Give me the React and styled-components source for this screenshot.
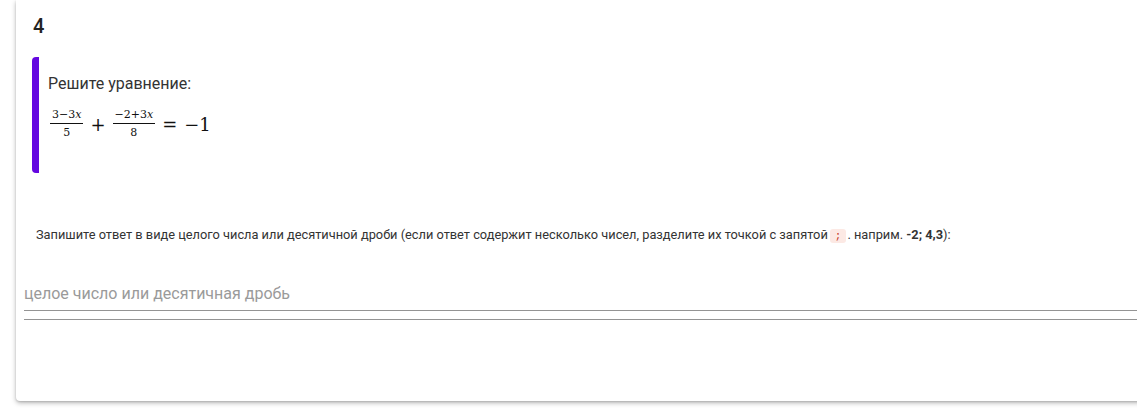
import React from "react";
import styled, { createGlobalStyle } from "styled-components";

const GlobalStyle = createGlobalStyle`
  html, body {
    margin: 0;
    padding: 0;
    background: #ffffff;
    overflow: hidden;
  }
  body {
    font-family: Roboto, "Liberation Sans", Arial, sans-serif;
    color: #222;
  }
`;

const Page = styled.div`
  padding-left: 16px;
  padding-bottom: 17px;
`;

const Card = styled.section`
  width: calc(100% + 40px);
  background: #fff;
  border-radius: 0 0 4px 4px;
  box-shadow: 0 2px 5px rgba(0, 0, 0, 0.28), 0 1px 2px rgba(0, 0, 0, 0.12);
  padding: 12px 0 81px 0;
`;

const Number = styled.h2`
  margin: 0 0 17px 17px;
  font-size: 20px;
  line-height: 28px;
  font-weight: 500;
  color: #222;
`;

const Task = styled.div`
  margin-left: 16px;
  border-left: 7px solid #6407e0;
  border-radius: 4px 0 0 4px;
  padding: 15px 0 0 9px;
  height: 101px;
`;

const Prompt = styled.p`
  margin: 0 0 13px 0;
  font-size: 16px;
  line-height: 24px;
  color: #333;
`;

const Formula = styled.div`
  display: flex;
  align-items: center;
  gap: 7px;
  padding-left: 2px;
  font-family: "DejaVu Serif", "Liberation Serif", serif;
  font-size: 18px;
  color: #111;
  height: 30px;
`;

const Frac = styled.span`
  display: inline-flex;
  flex-direction: column;
  align-items: center;
  font-size: 11px;
  line-height: 12px;
`;

const Num = styled.span`
  padding: 0 2px 2px;
  border-bottom: 1px solid #111;
`;

const Den = styled.span`
  padding-top: 3px;
`;

const Var = styled.i`
  font-style: italic;
`;

const Op = styled.span`
  line-height: 1;
  position: relative;
  top: ${(p) => (p.$shift ? p.$shift : 0)}px;
`;

const Hint = styled.p`
  margin: 53px 0 0 20px;
  font-size: 12.8px;
  line-height: 18px;
  color: #333;
`;

const Code = styled.code`
  display: inline-block;
  font-family: "Liberation Mono", monospace;
  font-size: 11px;
  line-height: 14px;
  padding: 0 5px;
  margin: 0 1px 0 2px;
  border-radius: 3px;
  background: #fce9e4;
  color: #c7372a;
`;

const Field = styled.div`
  margin: 32px 0 0 8px;
`;

const Input = styled.input`
  display: block;
  box-sizing: border-box;
  width: 100%;
  height: 35px;
  padding: 0;
  border: none;
  border-bottom: 1px solid #949494;
  font-family: Roboto, "Liberation Sans", Arial, sans-serif;
  font-size: 16px;
  color: #222;
  background: transparent;
  outline: none;

  &::placeholder {
    color: #9a9a9a;
  }
`;

const Rule = styled.hr`
  margin: 8px 0 0 0;
  border: none;
  border-top: 1px solid #949494;
`;

const Fraction = ({ top, bottom }) => (
  <Frac>
    <Num>{top}</Num>
    <Den>{bottom}</Den>
  </Frac>
);

export default function App() {
  return (
    <Page>
      <GlobalStyle />
      <Card>
        <Number>4</Number>
        <Task>
          <Prompt>Решите уравнение:</Prompt>
          <Formula>
            <Fraction
              top={
                <>
                  3−3<Var>x</Var>
                </>
              }
              bottom="5"
            />
            <Op $shift={1}>+</Op>
            <Fraction
              top={
                <>
                  −2+3<Var>x</Var>
                </>
              }
              bottom="8"
            />
            <Op $shift={1}>=</Op>
            <Op $shift={1}>−1</Op>
          </Formula>
        </Task>
        <Hint>
          Запишите ответ в виде целого числа или десятичной дроби (если ответ
          содержит несколько чисел, разделите их точкой с запятой
          <Code>;</Code>. наприм. <b>-2; 4,3</b>):
        </Hint>
        <Field>
          <Input placeholder="целое число или десятичная дробь" />
          <Rule />
        </Field>
      </Card>
    </Page>
  );
}
